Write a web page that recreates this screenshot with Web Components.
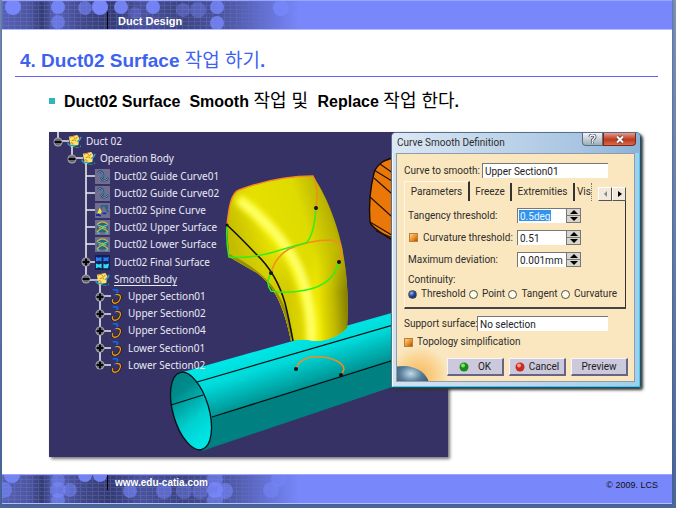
<!DOCTYPE html>
<html lang="ko">
<head>
<meta charset="utf-8">
<title>Duct Design</title>
<style>
html{height:100%}
body{margin:0;min-height:100%;display:grid;background:linear-gradient(#7c93bd,#6f86b0 30%,#4a679c);font-family:"Liberation Sans","Noto Sans CJK KR",sans-serif}
</style>
</head>
<body>
<slide-page>
  <slide-band slot="header" kind="top"><span>Duct Design</span></slide-band>
  <slide-title>4. Duct02 Surface <span>작업 하기</span>.</slide-title>
  <slide-point>Duct02 Surface&nbsp; Smooth <span>작업 및&nbsp;</span> Replace <span>작업 한다</span>.</slide-point>
  <slide-stage>
    <cad-scene slot="scene">
      <spec-row level="0" toggle="minus" icon="body">Duct 02</spec-row>
      <spec-row level="1" toggle="minus" icon="body">Operation Body</spec-row>
      <spec-row level="2" icon="guide">Duct02 Guide Curve01</spec-row>
      <spec-row level="2" icon="guide">Duct02 Guide Curve02</spec-row>
      <spec-row level="2" icon="spine">Duct02 Spine Curve</spec-row>
      <spec-row level="2" icon="surface">Duct02 Upper Surface</spec-row>
      <spec-row level="2" icon="surface">Duct02 Lower Surface</spec-row>
      <spec-row level="2" toggle="plus" icon="join">Duct02 Final Surface</spec-row>
      <spec-row level="2" toggle="minus" icon="body" current>Smooth Body</spec-row>
      <spec-row level="3" toggle="plus" icon="smooth">Upper Section01</spec-row>
      <spec-row level="3" toggle="plus" icon="smooth">Upper Section02</spec-row>
      <spec-row level="3" toggle="plus" icon="smooth">Upper Section04</spec-row>
      <spec-row level="3" toggle="plus" icon="smooth">Lower Section01</spec-row>
      <spec-row level="3" toggle="plus" icon="smooth">Lower Section02</spec-row>
    </cad-scene>
    <smooth-dialog slot="dialog"></smooth-dialog>
  </slide-stage>
  <slide-band slot="footer" kind="bottom"><a href="#site">www.edu-catia.com</a><small slot="end">© 2009. LCS</small></slide-band>
</slide-page>

<script>
const define = (name, html, setup) => {
  const template = document.createElement('template');
  template.innerHTML = html;
  customElements.define(name, class extends HTMLElement {
    constructor() {
      super();
      this.attachShadow({ mode: 'open' }).append(template.content.cloneNode(true));
    }
    connectedCallback() { if (setup) setup(this, this.shadowRoot); }
  });
};

define('slide-page', `
<style>
:host{display:grid;grid-template-rows:auto 1fr auto;margin:0 4px 4px 2px;background:#fff;box-shadow:0 0 3px #3d5480}
main{display:flex;flex-direction:column}
</style>
<slot name="header"></slot><main><slot></slot></main><slot name="footer"></slot>`);

/* Decorated band: a dark grid with translucent discs fading into flat blue. */
define('slide-band', `
<style>
:host{display:grid;height:30px;box-sizing:border-box;background:#7888fb;border-top:1px solid #9aa6fd;border-bottom:1px solid #b4bcfd;overflow:hidden}
svg,.bar{grid-area:1/1}
svg{width:310px;height:28px;display:block}
.bar{display:flex;justify-content:space-between;padding:0 14px 0 105px;position:relative}
.lead{border-left:1px solid #000;display:flex;align-items:center;height:17px;padding-left:10px;color:#fff;font:bold 11px/14px "Liberation Sans",sans-serif}
:host([kind=top]) .bar{align-items:flex-end}
:host([kind=bottom]) .lead{padding-left:7px;height:15px;font-size:10px}
::slotted(a){color:#fff;text-decoration:none}
::slotted(small){font:9px/20px "Liberation Sans",sans-serif;color:#111}
</style>
<svg viewBox="0 0 310 28" aria-hidden="true">
<defs>
<linearGradient id="fade"><stop offset="0" stop-color="#5661b4"/><stop offset=".09" stop-color="#4c559e"/><stop offset=".13" stop-color="#343b70"/><stop offset=".17" stop-color="#5661b4"/><stop offset=".27" stop-color="#3f4684"/><stop offset=".35" stop-color="#343a70"/><stop offset=".45" stop-color="#4a529b"/><stop offset=".58" stop-color="#3c437e"/><stop offset=".74" stop-color="#4f59a6"/><stop offset=".86" stop-color="#6573d6"/><stop offset=".96" stop-color="#7888fb"/></linearGradient>
<linearGradient id="veil"><stop offset="0" stop-color="#fff"/><stop offset=".7" stop-color="#fff"/><stop offset=".9" stop-color="#000"/></linearGradient>
<mask id="m"><rect width="310" height="28" fill="url(#veil)"/></mask>
<pattern id="grid" width="6" height="4" patternUnits="userSpaceOnUse"><path d="M.5 0v4M0 .5h6" stroke="#8592e6" opacity=".24"/></pattern>
</defs>
<rect width="310" height="28" fill="url(#fade)"/>
<rect width="310" height="28" fill="url(#grid)" mask="url(#m)"/>
<g id="discs" fill="#7888fb"></g>
</svg>
<div class="bar"><div class="lead"><slot></slot></div><slot name="end"></slot></div>`,
(host, root) => {
  const discs = host.getAttribute('kind') === 'top'
    ? [[11,6,8,1],[56,6,7,.9],[56,21,7,.6],[83,7,7,.6],[98,6,8,1],[119,6,7,.9],[133,12,6,.3],[151,6,7,.9],[181,9,7,.4],[196,9,8,.4],[215,6,7,.8],[215,22,7,.8],[279,7,8,.8]]
    : [[10,0,8,.9],[2,15,8,.6],[56,5,7,.5],[56,15,8,.6],[68,15,7,.5],[56,25,7,.6],[83,0,7,.9],[98,0,7,.9],[128,16,7,.6],[162,16,8,.5],[182,16,8,.4],[198,16,8,.4],[213,4,8,.6],[213,15,8,.8],[223,16,8,.6],[213,25,8,.6],[269,15,8,.5],[277,4,8,.5]];
  root.getElementById('discs').innerHTML = discs.map(([x, y, r, o]) => `<circle cx="${x}" cy="${y}" r="${r}" opacity="${o}"/>`).join('');
});

define('slide-title', `
<style>
:host{display:block;margin:0 14px 0 13px;padding:19px 0 4px 5px;border-bottom:1px solid #6a62f4;color:#3e62f0}
h1{margin:0;font-size:19px;line-height:23px;font-weight:700}
::slotted(span){font-weight:400}
</style><h1><slot></slot></h1>`);

define('slide-point', `
<style>
:host{display:flex;align-items:center;gap:9px;padding:13px 14px 1px 47px;color:#000;font-size:16px;line-height:22px;font-weight:700}
i{width:6px;height:6px;background:#31b6ba}
p{margin:0;height:22px}
::slotted(span){font-weight:400;font-size:18px}
</style><i></i><p><slot></slot></p>`);

define('slide-stage', `
<style>
:host{display:grid;grid-template-columns:342fr 57fr 193fr;align-items:start;padding:19px 31px 17px 47px}
.scene{grid-area:1/1/2/3}
.dialog{grid-area:1/2/2/4;z-index:1}
</style>
<div class="scene"><slot name="scene"></slot></div><div class="dialog"><slot name="dialog"></slot></div>`);

/* The drawing uses the coordinates of the slide itself. */
define('cad-scene', `
<style>
:host{display:grid;background:#363266;box-shadow:2px 2px 3px #777}
svg{grid-area:1/1;width:100%;display:block}
.tree{grid-area:1/1;display:grid;grid-auto-rows:1fr;height:241px;padding:1px 0 0 4px;align-self:start;justify-self:start}
</style>
<svg viewBox="49 132 399 325" aria-hidden="true">
<defs>
<linearGradient id="tube" gradientUnits="userSpaceOnUse" x1="270" y1="347" x2="289" y2="406"><stop offset="0" stop-color="#00e6e6"/><stop offset=".3" stop-color="#00dada"/><stop offset=".8" stop-color="#009292"/></linearGradient>
<linearGradient id="hole" x1="0" y1="0" x2=".2" y2="1"><stop offset="0" stop-color="#008080"/><stop offset=".3" stop-color="#008c8c"/><stop offset=".7" stop-color="#00d0d0"/><stop offset="1" stop-color="#00e6e6"/></linearGradient>
<linearGradient id="yel" gradientUnits="userSpaceOnUse" x1="238" y1="260" x2="348" y2="225"><stop offset="0" stop-color="#c4bc00"/><stop offset=".3" stop-color="#e6e000"/><stop offset=".65" stop-color="#dedb00"/><stop offset=".87" stop-color="#bab400"/><stop offset="1" stop-color="#8a8400"/></linearGradient>
<linearGradient id="low" gradientUnits="userSpaceOnUse" x1="288" y1="300" x2="348" y2="296"><stop offset="0" stop-color="#d2ca00"/><stop offset=".5" stop-color="#eee600"/><stop offset=".75" stop-color="#c0b900"/><stop offset="1" stop-color="#817b00"/></linearGradient>
<linearGradient id="vis" x1="0" y1="0" x2="0" y2="1"><stop offset=".45" stop-color="#000"/><stop offset=".7" stop-color="#fff"/></linearGradient>
<mask id="lm"><rect x="220" y="170" width="135" height="175" fill="url(#vis)"/></mask>
<filter id="soft" x="-30%" y="-10%" width="160%" height="120%"><feGaussianBlur stdDeviation="3"/></filter>
<clipPath id="duct"><path d="M227 225C229 207 231 193 239 190C263 181 288 176 313 176C325 193 337 222 342 247C347 272 349 299 347 328Q334 341 314 341Q303 338 291 341C285 312 277 288 257 273L229 257Z"/></clipPath>
</defs>
<path d="M183 372L448 297V368L202 450Z" fill="url(#tube)"/>
<path d="M212 417L448 343V368L202 451Z" fill="#008080"/>
<ellipse cx="191" cy="411" rx="18" ry="40" transform="rotate(-16 191 411)" fill="url(#hole)" stroke="#001018" stroke-width="1.3"/>
<g fill="none" stroke="#001014" stroke-width="1.3"><path d="M197 382L448 309M212 417L448 343M171 405L203 395"/></g>
<g clip-path="url(#duct)">
<rect x="220" y="170" width="135" height="175" fill="url(#yel)"/>
<rect x="220" y="170" width="135" height="175" fill="url(#low)" mask="url(#lm)"/>
<path d="M238 198Q285 236 300 277T312 345" fill="none" stroke="#ffff2c" stroke-width="11" filter="url(#soft)"/>
<path d="M240 201Q281 232 297 264Q312 294 311 345" fill="none" stroke="#ffffa0" stroke-width="4" filter="url(#soft)"/>
<path d="M226 254Q260 270 275 292T290 342" fill="none" stroke="#989000" stroke-width="3"/>
</g>
<path d="M227 225Q240 237 255 253Q276 272 285 303Q289 319 293 341" fill="none" stroke="#111" stroke-width="1.6"/>
<g fill="none" stroke-width="1.5">
<path d="M227 225C229 207 231 193 239 190C263 181 288 176 313 176Q319 187 316 208M271 273Q275 257 289 249Q309 240 331 240Q347 242 339 262M296 369Q298 360 311 357Q327 356 337 361Q349 368 340 375" stroke="#f58a20"/>
<path d="M227 225Q226 243 229 257Q250 259 274 252Q300 244 306 243Q314 236 316 208M271 273Q265 283 271 291Q286 294 306 290Q333 285 339 262" stroke="#30ef18"/>
</g>
<g fill="#111"><circle cx="227" cy="225" r="1.5"/><circle cx="316" cy="208" r="2"/><circle cx="339" cy="262" r="2"/><circle cx="271" cy="273" r="2"/><circle cx="296" cy="369" r="2"/><circle cx="341" cy="375" r="2"/></g>
<path d="M400 155L384 161Q376 166 374 173Q368 197 370 222Q372 229 400 244Z" fill="#e97808" stroke="#180c00" stroke-width="1.4"/>
<path d="M380 164L400 178M374 170L400 186M374 178L400 201M370 197L400 224M370 222L400 240M376 231L400 241" stroke="#211000" stroke-width="1.1"/>
<path d="M58 132V141M58 141H69M72 146V158H83M86 163V280H98M86 176H95M86 193H95M86 210H95M86 227H95M86 244H95M86 262H95M100 284V365M100 296H111M100 314H111M100 331H111M100 348H111M100 365H111" fill="none" stroke="#e8e8ee" stroke-width="1.6"/>
</svg>
<div class="tree"><slot></slot></div>`);

const ICONS = {
  body: '<path d="M2 3L11 1l2 3-1 8-8 2z" fill="#ffe46a"/><path d="M3 4q4-3 5 0t3-1M5 7q3-2 5 1M3 10q3-2 4 1" fill="none" stroke="#c87820"/><path d="M1 9q0 4 5 3 3 3 9 1M11 8q3-1 4-5" fill="none" stroke="#2aa4c8" stroke-width="1.5"/><path d="M8 13h6" stroke="#143c68" stroke-width="1.5"/>',
  guide: '<path d="M0 0h16v16H0z" fill="#716d90"/><path d="M3 4q3-3 5 0 2 4-1 6 1 4 6 1l1-2" fill="none" stroke="#203a60" stroke-width="2.2"/><path d="M3 4q3-3 5 0 2 4-1 6 1 4 6 1l1-2" fill="none" stroke="#59b3cc"/>',
  spine: '<path d="M0 0h16v16H0z" fill="#716d90"/><path d="M2 12L5 5l2 4-2 4z" fill="#f2ec20"/><path d="M1 13l3-1 2 2M8 11h4" stroke="#182cbe" stroke-width="2"/><path d="M7 6V3h6v3M11 4l3 6" fill="none" stroke="#285d8c" stroke-width="1.5"/>',
  surface: '<path d="M0 0h16v16H0z" fill="#716d90"/><path d="M3 5l4-3 5 1 2 5-2 5H4L2 9z" fill="#2c6478"/><path d="M2 5q6-6 12 0M2 13q6-8 12 0M4 9q4-5 8 0" fill="none" stroke="#cabc3e" stroke-width="1.2"/><path d="M3 6h3M10 6h3M2 14h3M11 14h3M7 8h3" stroke="#38cfd2" stroke-width="1.5"/>',
  join: '<path d="M0 0h16v16H0z" fill="#15204f"/><path d="M1 2l3 1 3-1v5L4 6 1 7zM9 2l2 1 4-1-1 3 1 2-3-1-3 1z" fill="#257eff"/><path d="M1 9l3 1 3-1v5L4 13l-3 1zM9 9l2 1 4-1-1 5H9z" fill="#2edcf7"/>',
  smooth: '<path d="M4 1q6-1 5 2T6 7" fill="none" stroke="#1263ec" stroke-width="2"/><path d="M7 6q6-1 5 4-2 6-7 5-2-1-1-4" fill="none" stroke="#281408" stroke-width="2.8"/><path d="M7 6q6-1 5 4-2 6-7 5-2-1-1-4" fill="none" stroke="#e09a22" stroke-width="1.5"/>'
};
define('spec-row', `
<style>
:host{display:flex;align-items:center;gap:4px;color:#e9e9f2;font:10px/17px "Noto Sans","Noto Sans CJK KR",sans-serif;white-space:nowrap}
:host([level="1"]){padding-left:14px}
:host([level="2"]){padding-left:28px}
:host([level="3"]){padding-left:42px}
:host([current]) span{text-decoration:underline;text-underline-offset:2px}
svg{display:block;flex:none}
</style>
<svg id="t" width="10" height="10" viewBox="0 0 10 10" aria-hidden="true"></svg><svg id="i" width="15" height="15" viewBox="0 0 16 16" aria-hidden="true"></svg><span><slot></slot></span>`,
(host, root) => {
  const toggle = host.getAttribute('toggle');
  if (toggle) root.getElementById('t').innerHTML = '<circle cx="5" cy="5" r="4.5" fill="#a9a9b2"/><circle cx="5" cy="5" r="3.4" fill="#676770"/><path d="M1.5 5h7' + (toggle === 'plus' ? 'M5 1.5v7' : '') + '" stroke="#08080c" stroke-width="2"/>';
  root.getElementById('i').innerHTML = ICONS[host.getAttribute('icon')];
});

const CONTROL = `
input[type=text]{box-sizing:border-box;min-width:0;height:15px;margin:0;padding:0 2px;border:0;border-top:1px solid #777;border-left:1px solid #777;border-radius:0;background:#fff;color:#222;font:inherit;outline:0}`;

define('spin-field', `
<style>
:host{display:grid;grid-template-columns:109px 49px 15px;align-items:center}
${CONTROL}
label{display:flex;align-items:center;gap:4px}
.check{appearance:none;box-sizing:border-box;width:9px;height:9px;margin:0 1px;background:linear-gradient(135deg,#ffd189,#e98a20 60%,#a8500c);border:1px solid #b9803c}
:host(:not([optional])) .check{display:none}
.spin{display:grid;height:15px;border:1px solid #777;box-sizing:border-box}
button{display:grid;place-items:center;min-height:0;padding:0;border:0;background:#d9d5ce}
button+button{border-top:1px solid #777}
svg{display:block}
input[type=text]{width:auto;margin-left:0}
:host([picked]) input[type=text]{background:linear-gradient(#3193ed,#3193ed) 1px 1px/32px 11px no-repeat #fff;color:#e8f5ff}
</style>
<label for="v"><input class="check" type="checkbox" checked aria-label="Use threshold"><slot></slot></label>
<input id="v" type="text">
<div class="spin"><button aria-label="Increase"><svg width="8" height="4"><path d="M0 4L4 0l4 4z"/></svg></button><button aria-label="Decrease"><svg width="8" height="4"><path d="M0 0h8L4 4z"/></svg></button></div>`,
(host, root) => {
  const input = root.getElementById('v');
  input.value = host.getAttribute('value');
  input.setAttribute('aria-label', host.textContent);
});

define('smooth-dialog', `
<style>
:host{display:block;border:1px solid #55708c;border-right-color:#15546c;border-bottom-color:#15546c;border-radius:5px 5px 2px 2px;background:linear-gradient(90deg,#d3e1f1,#c3d7ee 50%,#9dd0ec);box-shadow:inset 1px 1px #f4f9ff,inset -1px -1px #48c8ef,2px 2px 3px #333;color:#2d2d2d;font:10px/14px Roboto,"Noto Sans CJK KR",sans-serif;white-space:nowrap}
${CONTROL}
header{display:flex;justify-content:space-between;height:20px;padding-left:5px;background:linear-gradient(90deg,#dce8f5,#a9c5e2 75%,#89b2d8);border-radius:4px 4px 0 0}
h2{margin:0;font:inherit;line-height:20px}
.caption{display:flex;padding-right:4px}
.caption button{display:grid;place-items:center;height:13px;padding:0;border:1px solid #5f6c7c;border-top:0;background:linear-gradient(#eff2f5,#9eacb9);width:21px;border-radius:0 0 0 4px}
.caption .close{width:33px;background:linear-gradient(#e69a88,#bc3a20 55%,#d96b48);border-color:#7c2819;border-radius:0 0 4px 0}
.client{margin:0 5px 5px 4px;padding:9px 8px 5px 7px;border:1px solid #8f9cac;background:radial-gradient(circle at 22px 222px,#f7b860 0,#fad08a 16px,#fae7bf 30px);display:grid;overflow:hidden}
.field{display:grid;grid-template-columns:78px 126px;align-items:center}
.field.support{grid-template-columns:73px 131px;margin-top:7px}
.tabs{display:flex;align-items:end;margin-top:3px;height:20px}
.tabs [role=tab]{height:18px;padding:0;border:0;border-right:2px solid #333;background:#fae7bf;color:inherit;font:inherit;margin-top:2px;overflow:hidden;flex:0 0 42px}
.tabs [role=tab][aria-selected=true]{height:20px;border-left:1px solid #fff8e6;border-top:1px solid #fff8e6;flex-basis:66px}
.tabs .wide{flex-basis:63px}
.tabs .cut{flex-basis:17px;border-right:1px dotted #777;text-align:left;padding-left:2px}
.tabs .step{display:grid;place-items:center;width:14px;height:14px;padding:0;background:#f2e8dc;border:1px solid;border-color:#fff #555 #555 #fff}
.tabs .gap{flex:1}
.panel{display:grid;border:solid;border-width:0 1px 2px 1px;border-color:#fff8e6 #333 #444 #fff8e6;padding:7px 2px 6px 3px;row-gap:7px}
.panel p{margin:0;line-height:12px;margin-bottom:-6px}
.choices{display:flex;justify-content:space-between;padding-right:6px}
.choices label,.topology{display:flex;align-items:center;gap:4px}
input[type=radio]{appearance:none;box-sizing:border-box;width:9px;height:9px;margin:0;border:1px solid #4c5144;border-radius:50%;background:#fffce9}
input[type=radio]:checked{background:radial-gradient(circle at 35% 30%,#94b8f6,#2446a4 45%,#09173f)}
input[type=checkbox]{appearance:none;box-sizing:border-box;width:9px;height:9px;margin:0;background:linear-gradient(135deg,#ffd189,#e98a20 60%,#a8500c);border:1px solid #b9803c}
.topology{margin-top:4px}
.actions{display:flex;justify-content:flex-end;gap:5px;margin:9px -2px 0 0;position:relative}
.actions button{flex:0 0 57px;display:flex;align-items:center;justify-content:center;gap:9px;height:18px;padding:0;border:solid;border-width:1px 2px 2px 1px;border-color:#f7f4fb #686583 #686583 #f7f4fb;background:#ccc9dc;color:#222;font:inherit}
.actions .cancel{gap:4px}
.globe{position:absolute;left:-7px;bottom:-5px}
.globe svg{display:block}
</style>
<header><h2>Curve Smooth Definition</h2><div class="caption"><button aria-label="Help"><svg width="9" height="10" viewBox="0 0 9 10"><path d="M2 3q0-2 2.500-2T7 3q0 1-1.500 2T4.500 7M4.500 8v1.500" fill="none" stroke="#4c5866" stroke-width="3"/><path d="M2 3q0-2 2.500-2T7 3q0 1-1.500 2T4.500 7M4.500 8v1.500" fill="none" stroke="#fff" stroke-width="1.3"/></svg></button><button class="close" aria-label="Close"><svg width="10" height="9" viewBox="0 0 10 9"><path d="M2 1.500l6 6m0-6l-6 6" stroke="#6b3029" stroke-width="3.500"/><path d="M2 1.500l6 6m0-6l-6 6" stroke="#fff" stroke-width="2"/></svg></button></div></header>
<div class="client">
<div class="field"><label for="curve">Curve to smooth:</label><input id="curve" type="text" value="Upper Section01"></div>
<div class="tabs" role="tablist"><button role="tab" aria-selected="true">Parameters</button><button role="tab">Freeze</button><button role="tab" class="wide">Extremities</button><button role="tab" class="cut">Vis</button><span class="gap"></span><button class="step" aria-label="Previous tabs"><svg width="5" height="6"><path d="M4 0v6L1 3z" fill="#888"/></svg></button><button class="step" aria-label="Next tabs"><svg width="5" height="6"><path d="M1 0v6l4-3z"/></svg></button></div>
<div class="panel">
<spin-field value="0.5deg" picked>Tangency threshold:</spin-field>
<spin-field value="0.51" optional>Curvature threshold:</spin-field>
<spin-field value="0.001mm">Maximum deviation:</spin-field>
<p>Continuity:</p>
<div class="choices"><label><input type="radio" name="c" checked>Threshold</label><label><input type="radio" name="c">Point</label><label><input type="radio" name="c">Tangent</label><label><input type="radio" name="c">Curvature</label></div>
</div>
<div class="field support"><label for="support">Support surface:</label><input id="support" type="text" value="No selection"></div>
<label class="topology"><input type="checkbox" checked>Topology simplification</label>
<div class="actions"><div class="globe"><svg width="34" height="16" viewBox="0 0 34 16" aria-hidden="true"><defs><radialGradient id="g" cx=".65" cy=".2" r=".6"><stop offset="0" stop-color="#c2dbe8"/><stop offset=".35" stop-color="#567e9a"/><stop offset="1" stop-color="#202736"/></radialGradient></defs><ellipse cx="6" cy="20" rx="26" ry="19" fill="url(#g)"/></svg></div>
<button><svg width="10" height="10"><circle cx="5" cy="5" r="4.500" fill="#188d18"/><circle cx="4" cy="3.500" r="2" fill="#7be36e"/></svg>OK</button><button class="cancel"><svg width="10" height="10"><circle cx="5" cy="5" r="4.500" fill="#c92a1d"/><circle cx="4" cy="3.500" r="2" fill="#ff9c86"/></svg>Cancel</button><button>Preview</button></div>
</div>`);
</script>
</body>
</html>
